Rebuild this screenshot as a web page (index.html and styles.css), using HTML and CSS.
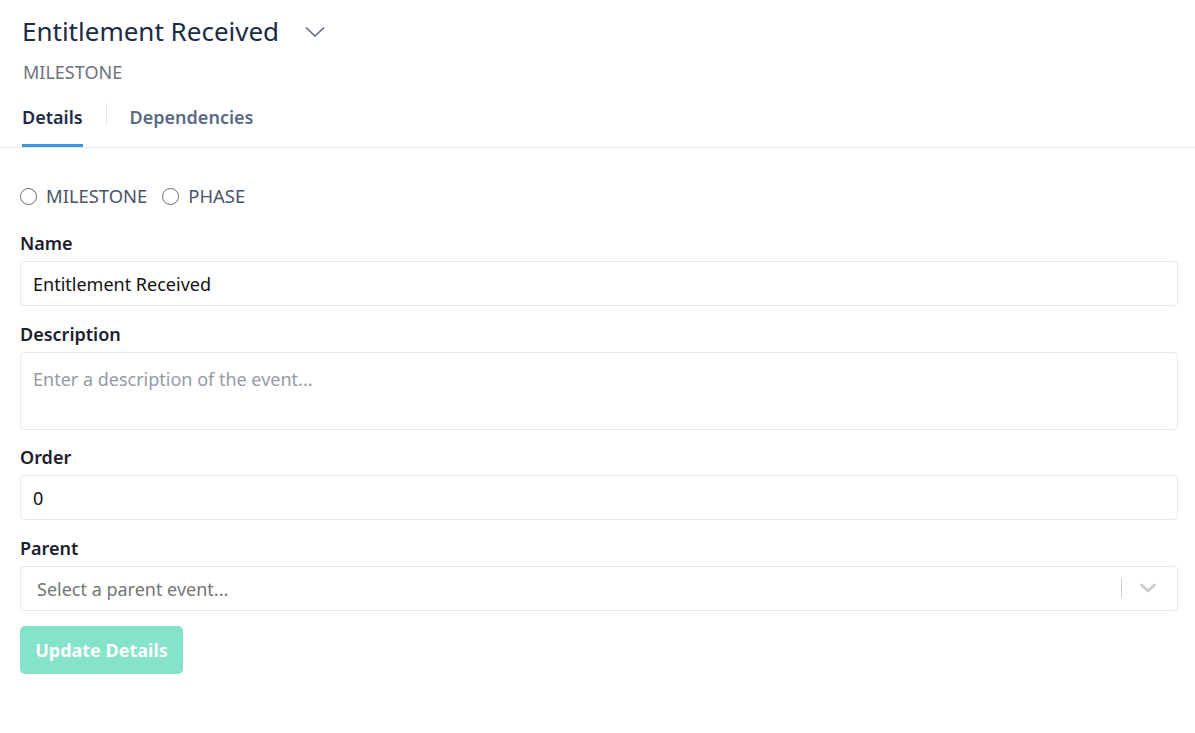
FILE: index.html
```html
<!DOCTYPE html>
<html lang="en">
<head>
<meta charset="utf-8">
<title>Entitlement Received</title>
<link rel="stylesheet" href="styles.css">
</head>
<body>
<header class="header">
  <div class="title-row">
    <h1 class="title">Entitlement Received</h1>
    <svg class="title-chevron" width="20" height="12" viewBox="0 0 20 12"><path d="M1 1.5 L10 10 L19 1.5" fill="none" stroke="#5a6478" stroke-width="1.6"/></svg>
  </div>
  <div class="kind">MILESTONE</div>
  <nav class="tabs">
    <a class="tab active">Details</a>
    <span class="tab-sep"></span>
    <a class="tab">Dependencies</a>
  </nav>
</header>
<main class="form">
  <div class="radios">
    <label class="radio"><span class="radio-dot"></span>MILESTONE</label>
    <label class="radio"><span class="radio-dot"></span>PHASE</label>
  </div>
  <div class="field">
    <div class="label">Name</div>
    <div class="input">Entitlement Received</div>
  </div>
  <div class="field">
    <div class="label">Description</div>
    <div class="input textarea placeholder">Enter a description of the event...</div>
  </div>
  <div class="field">
    <div class="label">Order</div>
    <div class="input">0</div>
  </div>
  <div class="field">
    <div class="label">Parent</div>
    <div class="input select">
      <span class="select-placeholder">Select a parent event...</span>
      <span class="select-sep"></span>
      <svg class="select-chevron" width="20" height="20" viewBox="0 0 20 20"><path d="M3.5 7 L10 13 L16.5 7" fill="none" stroke="#cccccc" stroke-width="2.8" stroke-linecap="round" stroke-linejoin="round"/></svg>
    </div>
  </div>
  <button class="btn">Update Details</button>
</main>
</body>
</html>
```
FILE: styles.css
```css
* { box-sizing: border-box; }
body {
  margin: 0;
  font-family: "Segoe UI", "Noto Sans", "Open Sans", sans-serif;
  color: #1a202c;
  background: #fff;
}
.header {
  padding: 10px 22px 0 22px;
  border-bottom: 1px solid #e8e8ec;
}
.title-row {
  display: flex;
  align-items: center;
  gap: 26px;
}
.title {
  margin: 0;
  font-size: 26px;
  font-weight: 400;
  line-height: 42px;
  color: #1c2b45;
}
.title-chevron { margin-top: 2px; }
.kind {
  margin-top: 8px;
  font-size: 18px;
  line-height: 24px;
  color: #6b7280;
  padding-left: 1px;
}
.tabs {
  display: flex;
  align-items: flex-start;
  margin-top: 21px;
}
.tab {
  font-size: 18px;
  font-weight: 600;
  line-height: 24px;
  color: #5a6a85;
  padding: 0 0 15px 0;
  border-bottom: 3px solid transparent;
}
.tab.active {
  color: #1c2b45;
  border-bottom-color: #3b95db;
}
.tab-sep {
  width: 1px;
  height: 23px;
  background: #e6e6ea;
  margin: -2px 23px 0 23px;
}
.form {
  padding: 36px 17px 0 20px;
}
.radios {
  display: flex;
  gap: 15px;
  margin-bottom: 23px;
}
.radio {
  display: flex;
  align-items: center;
  gap: 9px;
  font-size: 18.4px;
  line-height: 24px;
  color: #4a5568;
}
.radio-dot {
  width: 17px;
  height: 17px;
  border: 1.5px solid #6b6b6b;
  border-radius: 50%;
}
.field { margin-bottom: 15.6px; }
.label {
  font-size: 18px;
  font-weight: 600;
  line-height: 24px;
  color: #1a202c;
  margin-bottom: 6px;
}
.input {
  height: 45px;
  border: 1px solid #e8e8ee;
  border-radius: 4px;
  padding: 2px 12px 0 12px;
  font-size: 18px;
  line-height: 41px;
  color: #111;
}
.textarea {
  height: 78px;
  line-height: 24px;
  padding-top: 14px;
}
.placeholder { color: #959aa6; }
.select {
  display: flex;
  align-items: center;
  padding: 0 19px 0 16px;
}
.select-placeholder {
  flex: 1;
  padding-top: 3px;
  color: #757575;
}
.select-sep {
  width: 1px;
  height: 20px;
  background: #cccccc;
  margin-right: 16px;
}
.select-chevron { display: block; }
.btn {
  margin-top: 0;
  width: 163px;
  height: 48px;
  border: 0;
  border-radius: 5px;
  background: #84e3c9;
  color: #fff;
  font-family: inherit;
  font-size: 18px;
  font-weight: 700;
  padding: 0;
}
```
